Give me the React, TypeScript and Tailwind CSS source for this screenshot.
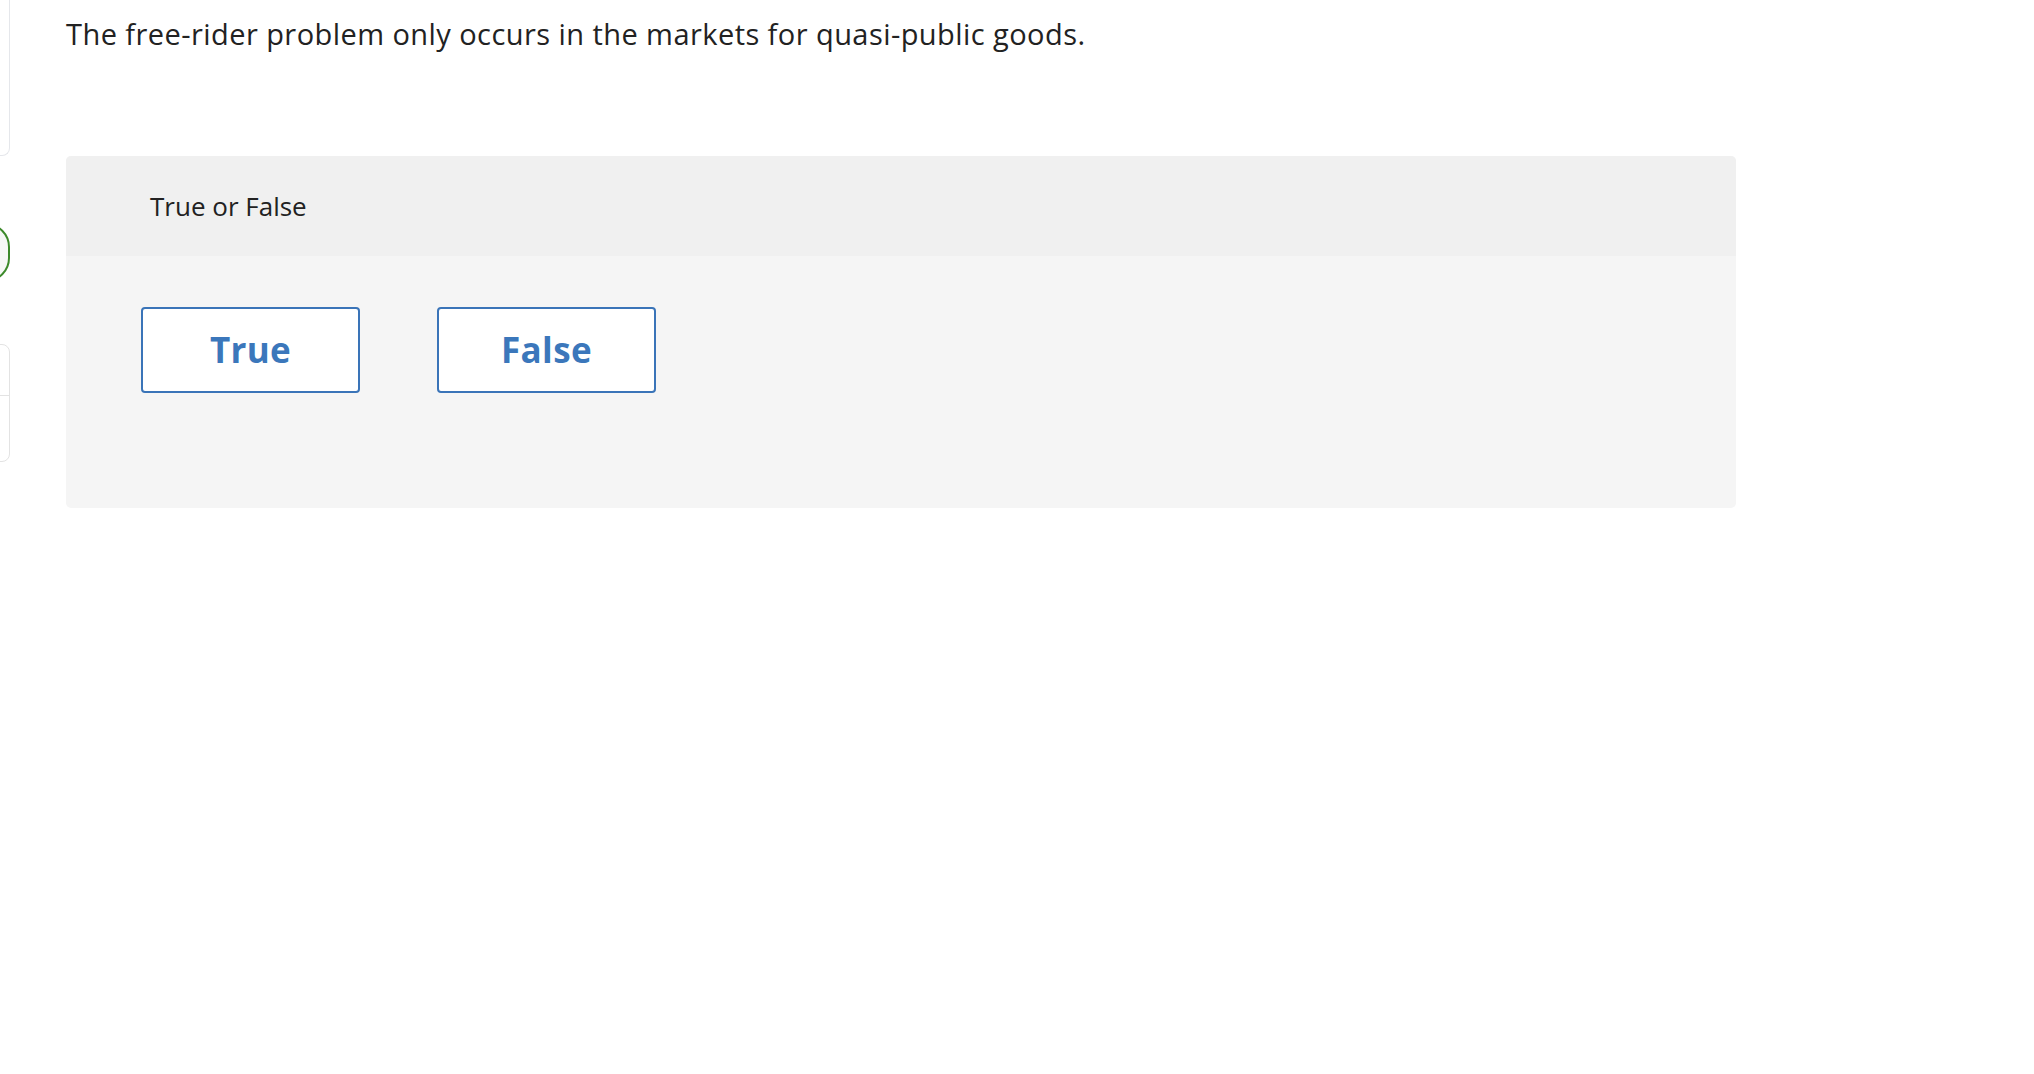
import React from 'react';

const font = { fontFamily: '"Open Sans", Lato, Arial, sans-serif' };

function SideRail() {
  // left navigation cards, mostly scrolled out of view
  return (
    <div className="w-[10px] shrink-0 overflow-hidden flex flex-col items-end">
      <div className="w-[200px] h-[156px] border border-gray-200 rounded-br-[8px] border-t-0 bg-white" />
      <div className="w-[200px] h-[59px] mt-[67px] border-2 border-[#3d8a2b] rounded-[24px] bg-[#f6f8f6]" />
      <div className="w-[200px] h-[118px] mt-[62px] border border-[#e3e3e3] rounded-[8px] flex flex-col">
        <div className="h-[51px] border-b border-[#e3e3e3]" />
        <div className="flex-1" />
      </div>
    </div>
  );
}

export default function App() {
  return (
    <div className="min-h-screen bg-white flex" style={font}>
      <SideRail />
      <div className="ml-[56px] w-[1670px]">
        <p className="pt-[14px] text-[29px] leading-[40px] tracking-[0.015em] text-[#222]">
          The free-rider problem only occurs in the markets for quasi-public goods.
        </p>

        <div className="mt-[102px] rounded-[5px] overflow-hidden bg-[#f5f5f5]">
          <div className="h-[100px] bg-[#f0f0f0] flex items-center pl-[84px]">
            <span className="text-[26px] text-[#222]">True or False</span>
          </div>
          <div className="pt-[51px] pb-[115px] pl-[75px] flex gap-[77px]">
            <button className="w-[219px] h-[86px] bg-white border-2 border-[#3a74b8] rounded-[4px] text-[35px] font-bold tracking-[0.01em] text-[#3b77bb]">
              True
            </button>
            <button className="w-[219px] h-[86px] bg-white border-2 border-[#3a74b8] rounded-[4px] text-[35px] font-bold tracking-[0.01em] text-[#3b77bb]">
              False
            </button>
          </div>
        </div>
      </div>
    </div>
  );
}
